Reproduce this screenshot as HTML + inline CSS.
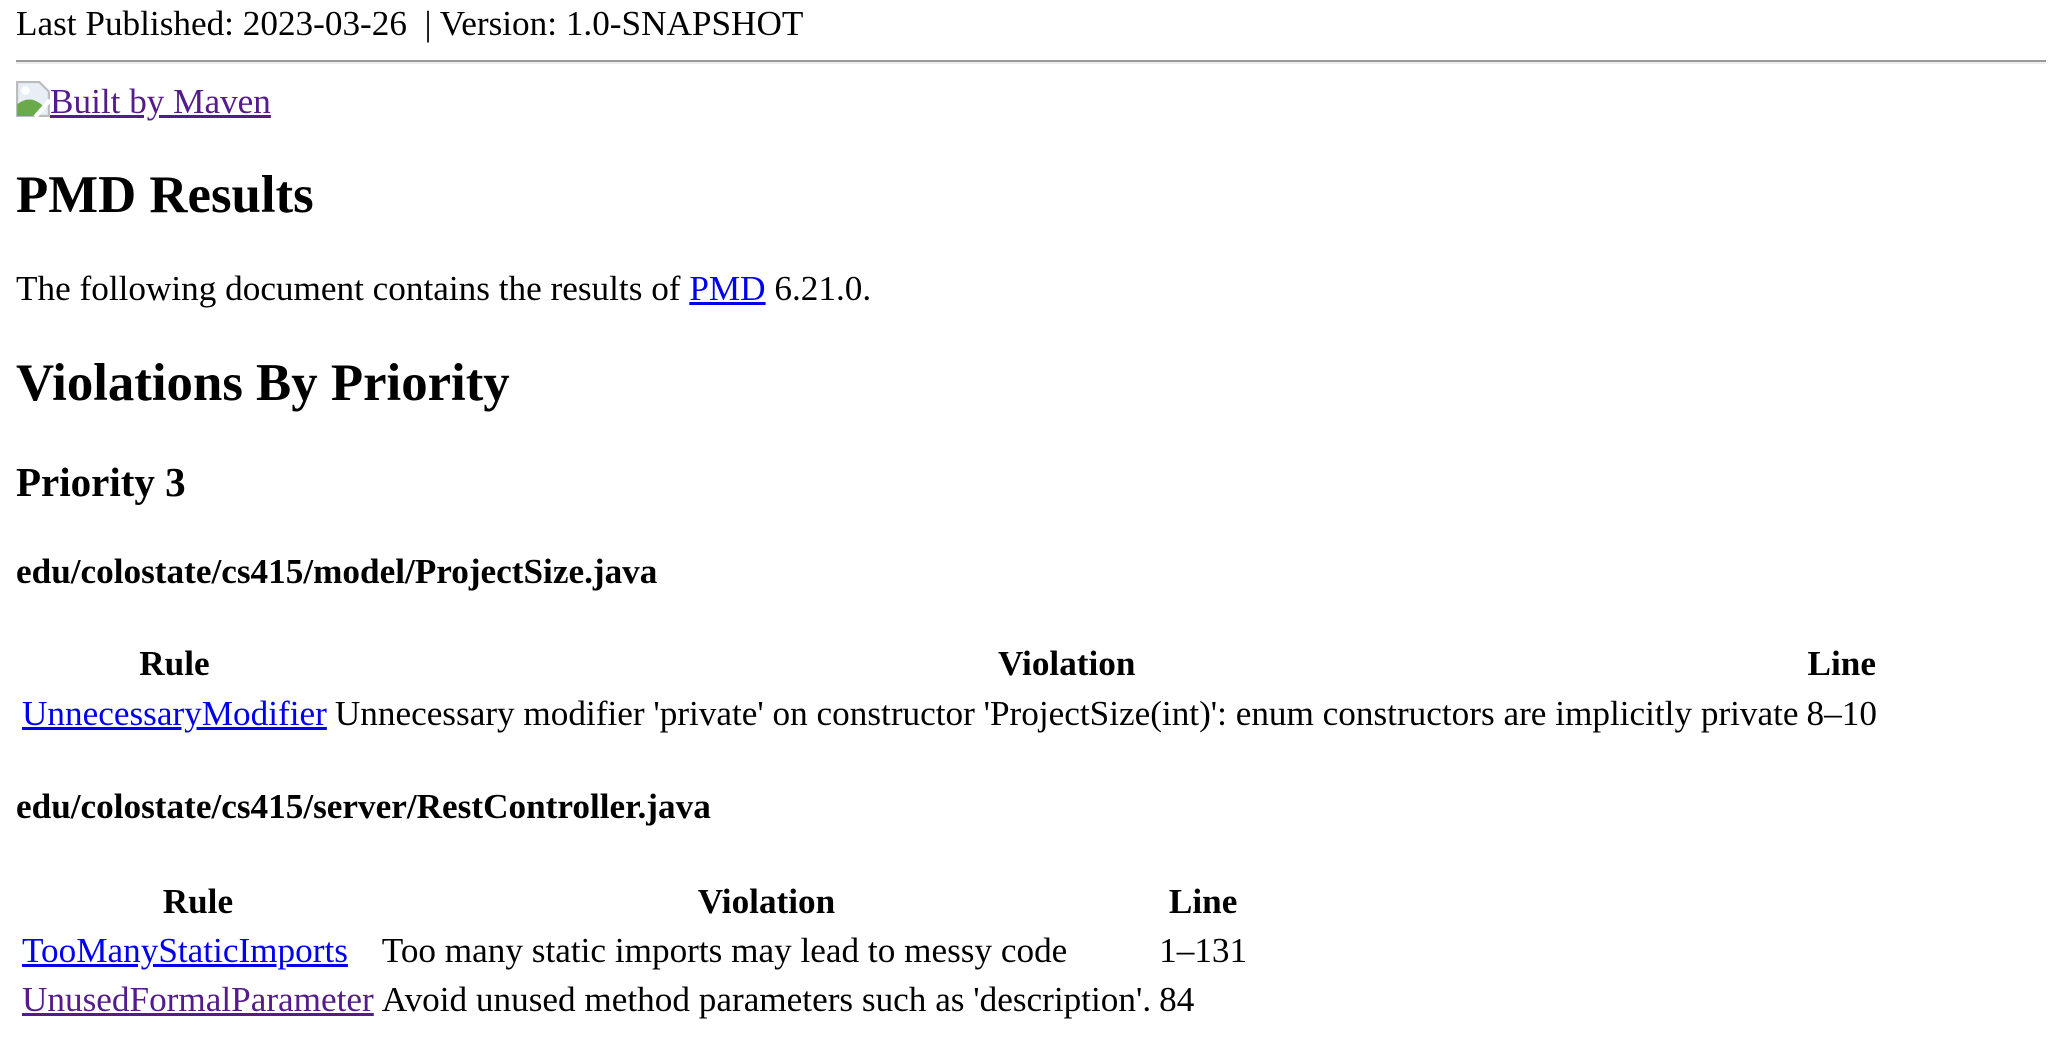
<!DOCTYPE html>
<html><head><meta charset="utf-8"><style>
html{zoom:2}
body{margin:2px 8px 8px 8px;font-family:"Liberation Serif",serif;font-size:17.6px;background:#fff;color:#000}
a{color:#0000ee}
a.v{color:#551a8b}
hr{margin:8px 0;border:0;border-top:1px solid #9a9a9a;border-bottom:1px solid #eee;height:0}
h1{font-size:26.4px;margin:21.5px 0 22px}
h2{font-size:26.4px;margin:22px 0 22px}
h3{font-size:20.5px;margin:22.3px 0 23px}
h4{font-size:17.6px;margin:23px 0}
p{margin:22px 0}
table{border-spacing:2px;margin-top:23px}
td,th{padding:1.3px 1px}
th{text-align:center}
</style></head><body>
<div>Last Published: 2023-03-26 &nbsp;| Version: 1.0-SNAPSHOT</div>
<hr>
<div style="margin-top:8.6px"><a class="v" href="#"><svg width="17" height="18" viewBox="0 0 16 17" style="vertical-align:-2px"><path d="M0.5 0.5H11L15.5 5V16.5H0.5Z" fill="#e8eef5" stroke="#bbb"/><path d="M0.5 16.5V11Q7 6 13 12L9 16.5Z" fill="#6aaa4a"/><circle cx="4.5" cy="4.5" r="2" fill="#fff"/><path d="M9 17L16 9" stroke="#fff" stroke-width="2"/></svg>Built by Maven</a></div>
<h1>PMD Results</h1>
<p>The following document contains the results of <a href="#">PMD</a> 6.21.0.</p>
<h2>Violations By Priority</h2>
<h3>Priority 3</h3>
<h4>edu/colostate/cs415/model/ProjectSize.java</h4>
<table><tr><th>Rule</th><th>Violation</th><th>Line</th></tr>
<tr><td><a href="#">UnnecessaryModifier</a></td><td>Unnecessary modifier 'private' on constructor 'ProjectSize(int)': enum constructors are implicitly private</td><td>8–10</td></tr></table>
<h4 style="margin-top:23.5px">edu/colostate/cs415/server/RestController.java</h4>
<table style="margin-top:24px"><tr><th>Rule</th><th>Violation</th><th>Line</th></tr>
<tr><td><a href="#">TooManyStaticImports</a></td><td>Too many static imports may lead to messy code</td><td>1–131</td></tr>
<tr><td><a class="v" href="#">UnusedFormalParameter</a></td><td>Avoid unused method parameters such as 'description'.</td><td>84</td></tr></table>
</body></html>
